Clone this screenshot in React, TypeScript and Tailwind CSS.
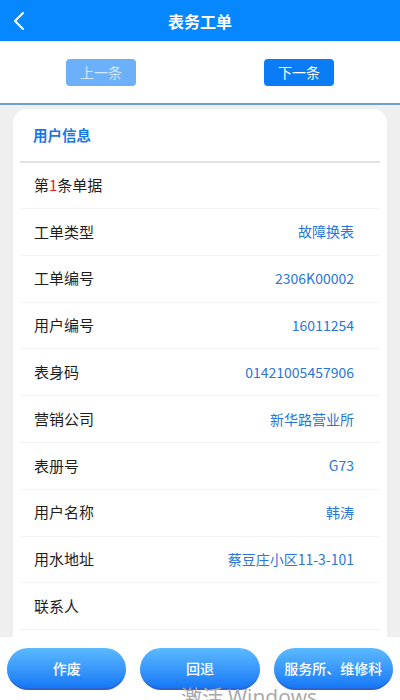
import React from "react";

const rows: { label: React.ReactNode; value?: string }[] = [
  { label: <>第<span className="text-[#e8202a]">1</span>条单据</> },
  { label: "工单类型", value: "故障换表" },
  { label: "工单编号", value: "2306K00002" },
  { label: "用户编号", value: "16011254" },
  { label: "表身码", value: "01421005457906" },
  { label: "营销公司", value: "新华路营业所" },
  { label: "表册号", value: "G73" },
  { label: "用户名称", value: "韩涛" },
  { label: "用水地址", value: "蔡豆庄小区11-3-101" },
  { label: "联系人" },
];

const font = { fontFamily: '"Noto Sans CJK SC", "Liberation Sans", sans-serif' };

export default function App() {
  return (
    <div className="relative flex flex-col h-[700px] w-[400px] overflow-hidden bg-[#efefef]" style={font}>
      {/* title bar */}
      <div className="relative flex items-center justify-center h-[41px] bg-[#0787fd] shrink-0">
        <svg className="absolute left-[12px] top-[11px]" width="14" height="20" viewBox="0 0 14 20">
          <polyline points="11,2 3,10 11,18" fill="none" stroke="white" strokeWidth="2" strokeLinecap="round" strokeLinejoin="round" />
        </svg>
        <span className="text-white text-[16px] font-bold">表务工单</span>
      </div>

      {/* prev / next */}
      <div className="flex items-center justify-around h-[64px] bg-white border-b-2 border-[#6d9ed8] shrink-0 px-[2px]">
        <button className="w-[70px] h-[27px] rounded-[4px] bg-[#6cb0fa] text-[#d3e8fd] text-[14px]">上一条</button>
        <button className="w-[70px] h-[27px] rounded-[4px] bg-[#0a7cf6] text-white text-[14px]">下一条</button>
      </div>

      {/* card */}
      <div className="flex-1 px-[13px] pt-[4px] overflow-hidden">
        <div className="bg-white rounded-[14px] px-[7px] min-h-[600px]">
          <div className="h-[52px] flex items-center pl-[13px] text-[14.5px] font-bold text-[#1a78e6]">用户信息</div>
          <div className="h-[2px] bg-[#e2e2e2]" />
          {rows.map((r, i) => (
            <div
              key={i}
              className={`flex items-center justify-between pl-[14px] pr-[26px] border-b border-[#f3f3f3] ${i === 0 ? "h-[46px]" : "h-[46.8px]"}`}
            >
              <span className="text-[15px] text-[#1e1e1e]">{r.label}</span>
              {r.value && <span className="text-[14px] text-[#2a76d8]">{r.value}</span>}
            </div>
          ))}
        </div>
      </div>

      {/* action bar */}
      <div className="flex gap-[14px] px-[7px] pt-[11px] h-[63px] bg-white shrink-0">
        {["作废", "回退", "服务所、维修科"].map((t) => (
          <button
            key={t}
            className="flex-1 h-[42px] rounded-full bg-gradient-to-b from-[#5cbaff] to-[#1677f5] border-b-2 border-[#2b62d6] text-white text-[14px] font-medium"
          >
            {t}
          </button>
        ))}
      </div>

      {/* windows watermark */}
      <div className="absolute left-[181px] top-[686px] text-[21px] text-[#a8a8a8] whitespace-nowrap leading-none">
        激活 <span style={{ fontFamily: '"Open Sans", "Liberation Sans", sans-serif' }}>Windows</span>
      </div>
    </div>
  );
}
